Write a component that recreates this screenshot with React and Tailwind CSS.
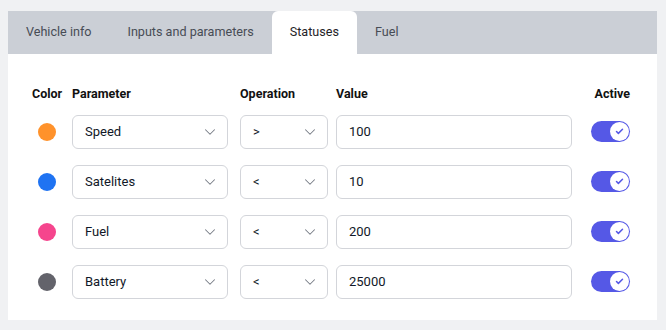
import { ChevronDown, Check } from 'lucide-react';

const tabs = ['Vehicle info', 'Inputs and parameters', 'Statuses', 'Fuel'];

const statuses = [
  { color: 'bg-[#ff922b]', parameter: 'Speed', operation: '>', value: '100' },
  { color: 'bg-[#1f73f2]', parameter: 'Satelites', operation: '<', value: '10' },
  { color: 'bg-[#f5458d]', parameter: 'Fuel', operation: '<', value: '200' },
  { color: 'bg-[#63636b]', parameter: 'Battery', operation: '<', value: '25000' },
];

function Select({ value, width }) {
  return (
    <div
      className={`${width} h-[34px] flex items-center justify-between rounded-md border border-[#d3d5da] bg-white pl-3 pr-2 text-[13px] text-[#111827]`}
    >
      <span>{value}</span>
      <ChevronDown className="h-[18px] w-[18px] text-[#767b85]" strokeWidth={1.4} />
    </div>
  );
}

function Toggle() {
  return (
    <div className="flex h-[21px] w-[39px] items-center justify-end rounded-full bg-[#5558e6] pr-px">
      <div className="flex h-[19px] w-[19px] items-center justify-center rounded-full bg-white">
        <Check className="h-[9px] w-[9px] text-[#5558e6]" strokeWidth={4} />
      </div>
    </div>
  );
}

export default function App() {
  return (
    <div className="min-h-[330px] bg-[#f0f1f3] px-2 pt-[11px] font-['Roboto',sans-serif]">
      <div className="w-[649px] bg-white">
        {/* Tabs */}
        <div className="flex h-[43px] bg-[#cbcfd6]">
          {tabs.map((tab) => (
            <div
              key={tab}
              className={`flex items-center px-[18px] text-[12.6px] ${
                tab === 'Statuses'
                  ? 'rounded-t-md bg-white text-[#1f2328]'
                  : 'text-[#474c55]'
              }`}
            >
              {tab}
            </div>
          ))}
        </div>

        <div className="pt-[31px] pb-[21px] pl-6 pr-[27px]">
          {/* Header */}
          <div className="flex items-center text-[12.5px] font-bold text-[#111]">
            <div className="w-[30px]">Color</div>
            <div className="ml-[10px] w-[156px]">Parameter</div>
            <div className="ml-3 w-[88px]">Operation</div>
            <div className="ml-2 w-[236px]">Value</div>
            <div className="ml-auto">Active</div>
          </div>

          <div className="mt-[11px] flex flex-col gap-4">
            {statuses.map((s) => (
              <div key={s.parameter} className="flex items-center">
                <div className="flex w-[30px] justify-center">
                  <div className={`h-[18px] w-[18px] rounded-full ${s.color}`} />
                </div>
                <div className="ml-[10px]">
                  <Select value={s.parameter} width="w-[156px]" />
                </div>
                <div className="ml-3">
                  <Select value={s.operation} width="w-[88px]" />
                </div>
                <div className="ml-2 flex h-[34px] w-[236px] items-center rounded-md border border-[#d3d5da] px-3 text-[13px] text-[#111827]">
                  {s.value}
                </div>
                <div className="ml-auto">
                  <Toggle />
                </div>
              </div>
            ))}
          </div>
        </div>
      </div>
    </div>
  );
}
